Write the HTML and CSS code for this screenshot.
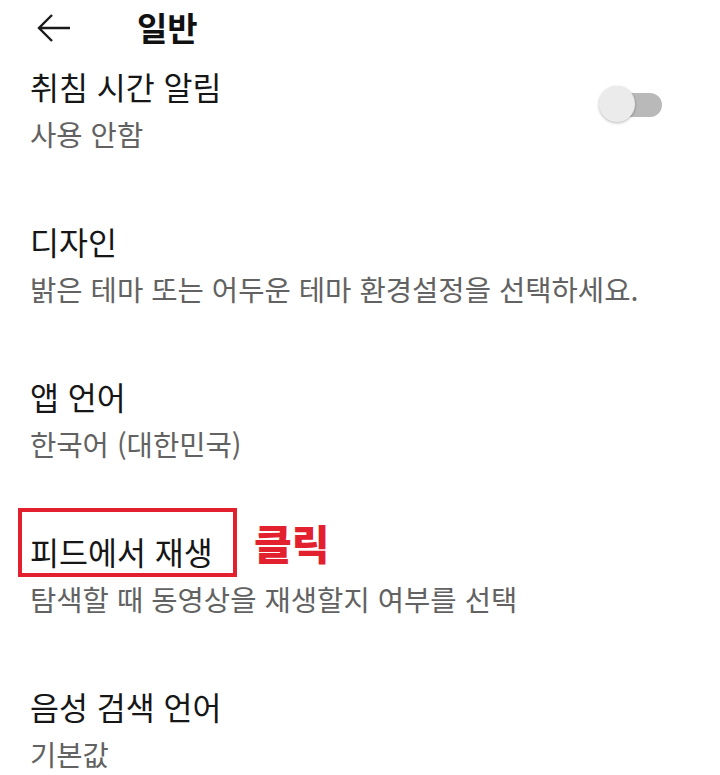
FILE: index.html
```html
<!DOCTYPE html>
<html lang="ko">
<head>
<meta charset="utf-8">
<link rel="stylesheet" href="styles.css">
</head>
<body>
<header class="bar">
  <svg class="back" width="34" height="30" viewBox="0 0 34 30" aria-hidden="true">
    <path d="M33 15H3M15 2L2 15L15 28" fill="none" stroke="#1a1a1a" stroke-width="2.4" stroke-linecap="butt" stroke-linejoin="miter"/>
  </svg>
  <h1 class="title">일반</h1>
</header>
<ul class="list">
  <li class="item">
    <div class="text">
      <div class="name">취침 시간 알림</div>
      <div class="desc">사용 안함</div>
    </div>
    <div class="toggle"><span class="knob"></span></div>
  </li>
  <li class="item">
    <div class="text">
      <div class="name">디자인</div>
      <div class="desc">밝은 테마 또는 어두운 테마 환경설정을 선택하세요.</div>
    </div>
  </li>
  <li class="item">
    <div class="text">
      <div class="name">앱 언어</div>
      <div class="desc">한국어 (대한민국)</div>
    </div>
  </li>
  <li class="item">
    <div class="text">
      <div class="name marked">피드에서 재생<span class="box"></span><span class="click">클릭</span></div>
      <div class="desc">탐색할 때 동영상을 재생할지 여부를 선택</div>
    </div>
  </li>
  <li class="item last">
    <div class="text">
      <div class="name">음성 검색 언어</div>
      <div class="desc">기본값</div>
    </div>
  </li>
</ul>
</body>
</html>
```

FILE: styles.css
```css
html, body {
  margin: 0;
  padding: 0;
  background: #ffffff;
}
body {
  width: 720px;
  height: 775px;
  overflow: hidden;
  font-family: "Noto Sans CJK KR", "Noto Sans", sans-serif;
  color: #151515;
}
.bar {
  display: flex;
  align-items: center;
  height: 58px;
  padding-left: 37px;
}
.back {
  display: block;
  margin-top: -2px;
}
.title {
  margin: 0 0 0 66px;
  font-size: 33px;
  font-weight: 700;
  line-height: 1;
  margin-top: -4px;
  color: #111;
}
.list {
  list-style: none;
  margin: 0;
  padding: 0;
}
.item {
  display: flex;
  align-items: flex-start;
  justify-content: space-between;
  height: 155px;
  padding-left: 30px;
  padding-right: 58px;
  box-sizing: border-box;
  padding-top: 8px;
}
.item.last {
  height: 120px;
}
.name {
  font-size: 31.5px;
  line-height: 40px;
  color: #161616;
}
.desc {
  font-size: 28.6px;
  line-height: 40px;
  margin-top: 8px;
  color: #626262;
}
.marked {
  position: relative;
}
.box {
  position: absolute;
  left: -12px;
  top: -23px;
  width: 211px;
  height: 61px;
  border: 4px solid #e3202d;
}
.click {
  position: absolute;
  left: 224px;
  top: -17px;
  font-size: 41px;
  font-weight: 900;
  line-height: 56px;
  color: #e3202d;
  white-space: nowrap;
}
.toggle {
  position: relative;
  width: 50px;
  height: 24px;
  margin-top: 27px;
  border-radius: 12px;
  background: #b9b9b9;
}
.knob {
  position: absolute;
  left: -13px;
  top: -7px;
  width: 36px;
  height: 36px;
  border-radius: 50%;
  background: #ebebeb;
  box-shadow: 0 1px 3px rgba(0,0,0,0.28);
}
```
